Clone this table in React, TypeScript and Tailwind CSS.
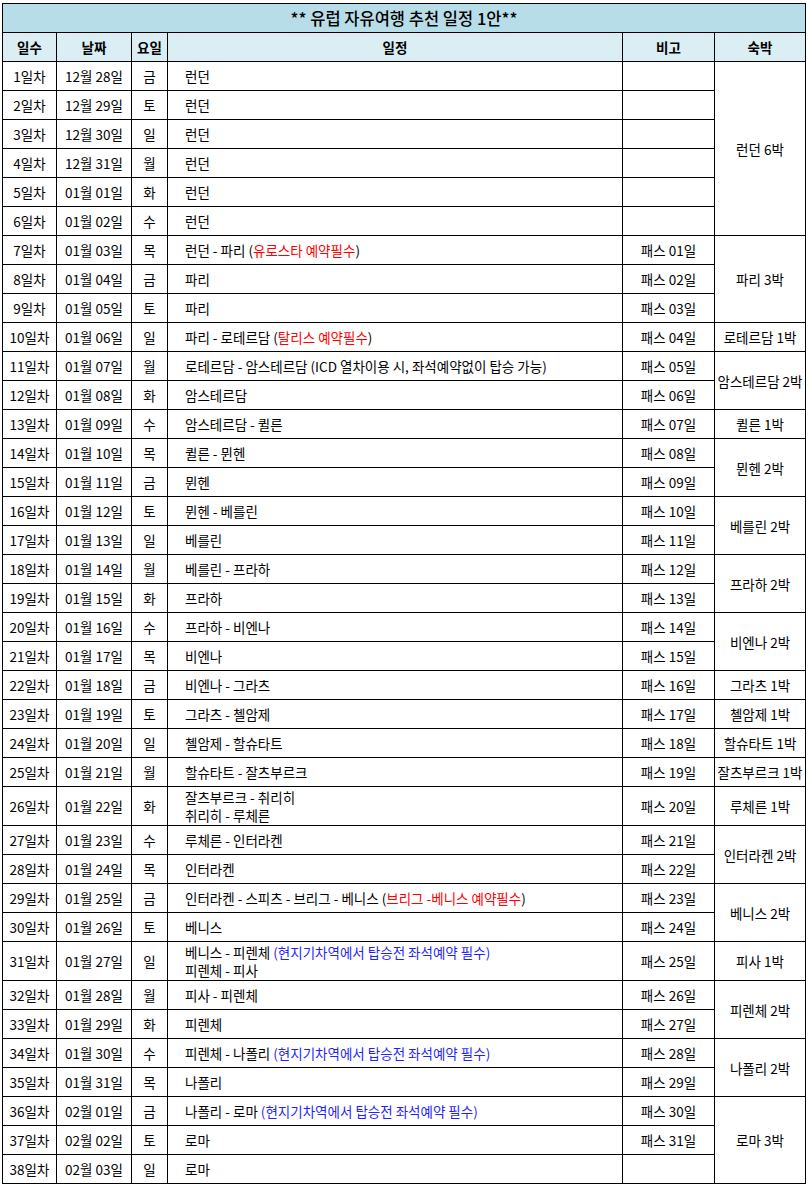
import React from "react";

type Row = {
  day: string;
  date: string;
  dow: string;
  plan: React.ReactNode;
  note: string;
  stay?: { text: string; span: number };
  tall?: boolean;
};

const R = ({ children }: { children: React.ReactNode }) => (
  <span className="text-[#ff0000]">{children}</span>
);
const B = ({ children }: { children: React.ReactNode }) => (
  <span className="text-[#1f1fff]">{children}</span>
);

const rows: Row[] = [
  { day: "1일차", date: "12월 28일", dow: "금", plan: "런던", note: "", stay: { text: "런던 6박", span: 6 } },
  { day: "2일차", date: "12월 29일", dow: "토", plan: "런던", note: "" },
  { day: "3일차", date: "12월 30일", dow: "일", plan: "런던", note: "" },
  { day: "4일차", date: "12월 31일", dow: "월", plan: "런던", note: "" },
  { day: "5일차", date: "01월 01일", dow: "화", plan: "런던", note: "" },
  { day: "6일차", date: "01월 02일", dow: "수", plan: "런던", note: "" },
  {
    day: "7일차", date: "01월 03일", dow: "목",
    plan: <>런던 - 파리 (<R>유로스타 예약필수</R>)</>,
    note: "패스 01일", stay: { text: "파리 3박", span: 3 },
  },
  { day: "8일차", date: "01월 04일", dow: "금", plan: "파리", note: "패스 02일" },
  { day: "9일차", date: "01월 05일", dow: "토", plan: "파리", note: "패스 03일" },
  {
    day: "10일차", date: "01월 06일", dow: "일",
    plan: <>파리 - 로테르담 (<R>탈리스 예약필수</R>)</>,
    note: "패스 04일", stay: { text: "로테르담 1박", span: 1 },
  },
  {
    day: "11일차", date: "01월 07일", dow: "월",
    plan: "로테르담 - 암스테르담 (ICD 열차이용 시, 좌석예약없이 탑승 가능)",
    note: "패스 05일", stay: { text: "암스테르담 2박", span: 2 },
  },
  { day: "12일차", date: "01월 08일", dow: "화", plan: "암스테르담", note: "패스 06일" },
  { day: "13일차", date: "01월 09일", dow: "수", plan: "암스테르담 - 퀼른", note: "패스 07일", stay: { text: "퀼른 1박", span: 1 } },
  { day: "14일차", date: "01월 10일", dow: "목", plan: "퀼른 - 뮌헨", note: "패스 08일", stay: { text: "뮌헨 2박", span: 2 } },
  { day: "15일차", date: "01월 11일", dow: "금", plan: "뮌헨", note: "패스 09일" },
  { day: "16일차", date: "01월 12일", dow: "토", plan: "뮌헨 - 베를린", note: "패스 10일", stay: { text: "베를린 2박", span: 2 } },
  { day: "17일차", date: "01월 13일", dow: "일", plan: "베를린", note: "패스 11일" },
  { day: "18일차", date: "01월 14일", dow: "월", plan: "베를린 - 프라하", note: "패스 12일", stay: { text: "프라하 2박", span: 2 } },
  { day: "19일차", date: "01월 15일", dow: "화", plan: "프라하", note: "패스 13일" },
  { day: "20일차", date: "01월 16일", dow: "수", plan: "프라하 - 비엔나", note: "패스 14일", stay: { text: "비엔나 2박", span: 2 } },
  { day: "21일차", date: "01월 17일", dow: "목", plan: "비엔나", note: "패스 15일" },
  { day: "22일차", date: "01월 18일", dow: "금", plan: "비엔나 - 그라츠", note: "패스 16일", stay: { text: "그라츠 1박", span: 1 } },
  { day: "23일차", date: "01월 19일", dow: "토", plan: "그라츠 - 첼암제", note: "패스 17일", stay: { text: "첼암제 1박", span: 1 } },
  { day: "24일차", date: "01월 20일", dow: "일", plan: "첼암제 - 할슈타트", note: "패스 18일", stay: { text: "할슈타트 1박", span: 1 } },
  { day: "25일차", date: "01월 21일", dow: "월", plan: "할슈타트 - 잘츠부르크", note: "패스 19일", stay: { text: "잘츠부르크 1박", span: 1 } },
  {
    day: "26일차", date: "01월 22일", dow: "화",
    plan: <>잘츠부르크 - 취리히<br />취리히 - 루체른</>,
    note: "패스 20일", stay: { text: "루체른 1박", span: 1 }, tall: true,
  },
  { day: "27일차", date: "01월 23일", dow: "수", plan: "루체른 - 인터라켄", note: "패스 21일", stay: { text: "인터라켄 2박", span: 2 } },
  { day: "28일차", date: "01월 24일", dow: "목", plan: "인터라켄", note: "패스 22일" },
  {
    day: "29일차", date: "01월 25일", dow: "금",
    plan: <>인터라켄 - 스피츠 - 브리그 - 베니스 (<R>브리그 -베니스 예약필수</R>)</>,
    note: "패스 23일", stay: { text: "베니스 2박", span: 2 },
  },
  { day: "30일차", date: "01월 26일", dow: "토", plan: "베니스", note: "패스 24일" },
  {
    day: "31일차", date: "01월 27일", dow: "일",
    plan: <>베니스 - 피렌체 <B>(현지기차역에서 탑승전 좌석예약 필수)</B><br />피렌체 - 피사</>,
    note: "패스 25일", stay: { text: "피사 1박", span: 1 }, tall: true,
  },
  { day: "32일차", date: "01월 28일", dow: "월", plan: "피사 - 피렌체", note: "패스 26일", stay: { text: "피렌체 2박", span: 2 } },
  { day: "33일차", date: "01월 29일", dow: "화", plan: "피렌체", note: "패스 27일" },
  {
    day: "34일차", date: "01월 30일", dow: "수",
    plan: <>피렌체 - 나폴리 <B>(현지기차역에서 탑승전 좌석예약 필수)</B></>,
    note: "패스 28일", stay: { text: "나폴리 2박", span: 2 },
  },
  { day: "35일차", date: "01월 31일", dow: "목", plan: "나폴리", note: "패스 29일" },
  {
    day: "36일차", date: "02월 01일", dow: "금",
    plan: <>나폴리 - 로마 <B>(현지기차역에서 탑승전 좌석예약 필수)</B></>,
    note: "패스 30일", stay: { text: "로마 3박", span: 3 },
  },
  { day: "37일차", date: "02월 02일", dow: "토", plan: "로마", note: "패스 31일" },
  { day: "38일차", date: "02월 03일", dow: "일", plan: "로마", note: "" },
];

export default function App() {
  return (
    <div
      className="bg-white min-h-[1186px] pt-[3px] pl-[2px] text-black"
      style={{ fontFamily: '"Noto Sans CJK KR", "Noto Sans", sans-serif' }}
    >
      <table className="table-fixed border-collapse w-[803px] text-[13.5px] leading-[18px]">
        <colgroup>
          <col className="w-[54px]" />
          <col className="w-[75px]" />
          <col className="w-[36px]" />
          <col className="w-[455px]" />
          <col className="w-[92px]" />
          <col className="w-[91px]" />
        </colgroup>
        <thead>
          <tr>
            <td
              colSpan={6}
              className="h-[29px] p-0 border border-black bg-[#b7dee8] text-center text-[16.5px] font-medium"
            >
              ** 유럽 자유여행 추천 일정 1안**
            </td>
          </tr>
          <tr className="bg-[#daeef3] font-bold">
            <td className="h-[29px] p-0 border border-black text-center">일수</td>
            <td className="p-0 border border-black text-center">날짜</td>
            <td className="p-0 border border-black text-center">요일</td>
            <td className="p-0 border border-black text-center">일정</td>
            <td className="p-0 border border-black text-center">비고</td>
            <td className="p-0 border border-black text-center">숙박</td>
          </tr>
        </thead>
        <tbody>
          {rows.map((r) => (
            <tr key={r.day}>
              <td className={`${r.tall ? "h-[39px]" : "h-[29px]"} p-0 border border-black text-center whitespace-nowrap`}>
                {r.day}
              </td>
              <td className="p-0 border border-black text-center whitespace-nowrap">{r.date}</td>
              <td className="p-0 border border-black text-center">{r.dow}</td>
              <td className="p-0 pl-[17px] border border-black text-left whitespace-nowrap">{r.plan}</td>
              <td className="p-0 border border-black text-center whitespace-nowrap">{r.note}</td>
              {r.stay && (
                <td rowSpan={r.stay.span} className="p-0 border border-black text-center whitespace-nowrap">
                  {r.stay.text}
                </td>
              )}
            </tr>
          ))}
        </tbody>
      </table>
    </div>
  );
}
